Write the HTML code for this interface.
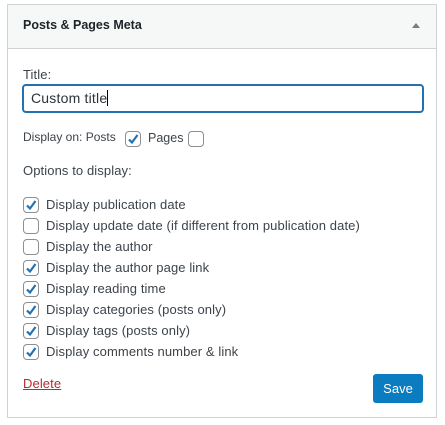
<!DOCTYPE html>
<html><head><style>
body{margin:0;width:445px;height:425px;background:#fff;font-family:"Liberation Sans",Arial,sans-serif;color:#3c434a;position:relative;overflow:hidden}
.a{position:absolute;white-space:nowrap}
.panel{position:absolute;left:7px;top:4px;width:430px;height:414px;border:1px solid #d0d3d6;box-sizing:border-box}
.hdr{position:absolute;left:8px;top:5px;width:428px;height:43px;background:#f6f7f7;border-bottom:1px solid #d0d3d6}
.cb{position:absolute;width:14px;height:14px;border:1px solid #8c8f94;border-radius:4px;background:#fff}
.cb svg{position:absolute;left:0;top:0}
.t{font-size:13px;letter-spacing:0.1px;color:#3c434a}
</style></head><body>
<div class="panel"></div>
<div class="hdr"></div>
<div class="a" style="left:23px;top:18px;font-size:12.5px;font-weight:bold;color:#1d2327">Posts &amp; Pages Meta</div>
<div class="a" style="left:412px;top:23px;width:0;height:0;border-left:4px solid transparent;border-right:4px solid transparent;border-bottom:5px solid #787c82"></div>
<div class="a t" style="left:23px;top:67px">Title:</div>
<div class="a" style="left:22px;top:84px;width:402px;height:29px;border:2px solid #2271b1;border-radius:4px;box-sizing:border-box"></div>
<div class="a" style="left:31px;top:90px;font-size:14px;letter-spacing:0.2px;color:#2c3338">Custom title<span style="display:inline-block;width:1px;height:16px;background:#000;vertical-align:-3px"></span></div>
<div class="a" style="left:23px;top:130px;font-size:12px">Display on: Posts</div>
<div class="cb" style="left:125px;top:131px"><svg width="14" height="14"><path d="M3 7.5 L6 10.5 L11.5 3" stroke="#2271b1" stroke-width="2.2" fill="none"/></svg></div>
<div class="a" style="left:148px;top:131px;font-size:12.5px">Pages</div>
<div class="cb" style="left:188px;top:131px"></div>
<div class="a t" style="left:23px;top:163px">Options to display:</div>
<div class="cb" style="left:23px;top:197px"><svg width="14" height="14"><path d="M3 7.5 L6 10.5 L11.5 3" stroke="#2271b1" stroke-width="2.2" fill="none"/></svg></div>
<div class="a t" style="left:46px;top:197px">Display publication date</div>
<div class="cb" style="left:23px;top:218px"></div>
<div class="a t" style="left:46px;top:218px">Display update date (if different from publication date)</div>
<div class="cb" style="left:23px;top:239px"></div>
<div class="a t" style="left:46px;top:239px">Display the author</div>
<div class="cb" style="left:23px;top:260px"><svg width="14" height="14"><path d="M3 7.5 L6 10.5 L11.5 3" stroke="#2271b1" stroke-width="2.2" fill="none"/></svg></div>
<div class="a t" style="left:46px;top:260px">Display the author page link</div>
<div class="cb" style="left:23px;top:281px"><svg width="14" height="14"><path d="M3 7.5 L6 10.5 L11.5 3" stroke="#2271b1" stroke-width="2.2" fill="none"/></svg></div>
<div class="a t" style="left:46px;top:281px">Display reading time</div>
<div class="cb" style="left:23px;top:302px"><svg width="14" height="14"><path d="M3 7.5 L6 10.5 L11.5 3" stroke="#2271b1" stroke-width="2.2" fill="none"/></svg></div>
<div class="a t" style="left:46px;top:302px">Display categories (posts only)</div>
<div class="cb" style="left:23px;top:323px"><svg width="14" height="14"><path d="M3 7.5 L6 10.5 L11.5 3" stroke="#2271b1" stroke-width="2.2" fill="none"/></svg></div>
<div class="a t" style="left:46px;top:323px">Display tags (posts only)</div>
<div class="cb" style="left:23px;top:344px"><svg width="14" height="14"><path d="M3 7.5 L6 10.5 L11.5 3" stroke="#2271b1" stroke-width="2.2" fill="none"/></svg></div>
<div class="a t" style="left:46px;top:344px">Display comments number &amp; link</div>
<div class="a t" style="left:23px;top:376px;color:#b32d2e;text-decoration:underline">Delete</div>
<div class="a" style="left:373px;top:374px;width:50px;height:29px;background:#0a7cbf;border-radius:3px;color:#fff;font-size:13px;line-height:29px;text-align:center">Save</div>
</body></html>
